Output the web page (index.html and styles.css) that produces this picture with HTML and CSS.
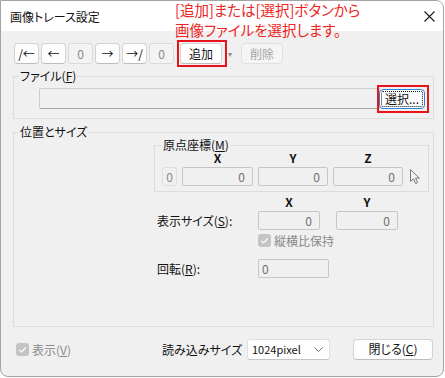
FILE: index.html
```html
<!DOCTYPE html>
<html lang="ja">
<head>
  <meta charset="UTF-8" />
  <title>画像トレース設定</title>
  <link rel="stylesheet" href="styles.css">
</head>
<body>
  <div class="window">
    <div class="titlebar">
      <span class="title">画像トレース設定</span>
      <svg class="close" viewBox="0 0 11 11" width="11" height="11">
        <path d="M0.5 0.5 L10.5 10.5 M10.5 0.5 L0.5 10.5" stroke="#1a1a1a" stroke-width="1.1" fill="none"/>
      </svg>
    </div>

    <div class="content">
      <div class="toolbar">
        <button class="btn nav">/←</button>
        <button class="btn nav">←</button>
        <span class="spin">0</span>
        <button class="btn nav">→</button>
        <button class="btn nav">→/</button>
        <span class="spin">0</span>
        <span class="mark-wrap add-wrap">
          <button class="btn add">追加</button>
          <span class="hl hl-add"></span>
        </span>
        <span class="drop">▾</span>
        <button class="btn del" disabled>削除</button>
      </div>

      <fieldset class="group file-group">
        <legend>ファイル(<u>F</u>)</legend>
        <div class="file-row">
          <span class="path"></span>
          <span class="mark-wrap">
            <button class="btn pick">選択...</button>
            <span class="hl hl-pick"></span>
          </span>
        </div>
      </fieldset>

      <fieldset class="group pos-group">
        <legend>位置とサイズ</legend>

        <fieldset class="group origin">
          <legend>原点座標(<u>M</u>)</legend>
          <div class="axis axis-head">
            <span class="c-mini"></span>
            <span class="c-x">X</span>
            <span class="c-y">Y</span>
            <span class="c-z">Z</span>
          </div>
          <div class="axis axis-row">
            <span class="c-mini mini">0</span>
            <span class="c-x field">0</span>
            <span class="c-y field">0</span>
            <span class="c-z field">0</span>
            <svg class="pointer" viewBox="0 0 10 16" width="10" height="16">
              <path d="M0.5 0.5 V12.5 L3.5 9.8 L5.6 14.6 L7.6 13.7 L5.6 9.1 H9.3 Z" fill="#f0f0f0" stroke="#7a7a7a" stroke-width="1"/>
            </svg>
          </div>
        </fieldset>

        <div class="size-grid">
          <span></span>
          <span class="head">X</span>
          <span class="head">Y</span>

          <span class="lbl">表示サイズ(<u>S</u>):</span>
          <span class="field">0</span>
          <span class="field">0</span>

          <span></span>
          <span class="check-line">
            <span class="check">
              <svg viewBox="0 0 13 13" width="13" height="13"><path d="M3.3 6.8 L5.5 9 L9.8 4.5" stroke="#fff" stroke-width="1.2" fill="none"/></svg>
            </span>
            <span class="muted">縦横比保持</span>
          </span>
          <span></span>

          <span class="lbl rot-lbl">回転(<u>R</u>):</span>
          <span class="field field-left rot">0</span>
          <span></span>
        </div>
      </fieldset>

      <div class="footer">
        <span class="check-line show">
          <span class="check">
            <svg viewBox="0 0 13 13" width="13" height="13"><path d="M3.3 6.8 L5.5 9 L9.8 4.5" stroke="#fff" stroke-width="1.2" fill="none"/></svg>
          </span>
          <span class="muted">表示(<u>V</u>)</span>
        </span>
        <span class="load-lbl">読み込みサイズ</span>
        <span class="select">
          <span>1024pixel</span>
          <svg viewBox="0 0 9 5" width="9" height="5"><path d="M0.5 0.5 L4.5 4.5 L8.5 0.5" stroke="#6a6a6a" fill="none"/></svg>
        </span>
        <button class="btn close-btn">閉じる(<u>C</u>)</button>
      </div>
    </div>

    <div class="note">[追加]または[選択]ボタンから<br>画像ファイルを選択します。</div>
  </div>
</body>
</html>
```

FILE: styles.css
```css
body {
  margin: 0;
  background: #fff;
  font-family: "Noto Sans CJK JP", "Noto Sans", sans-serif;
  font-size: 12px;
  font-feature-settings: "palt";
  color: #111;
}

.window {
  position: relative;
  box-sizing: border-box;
  width: 444px;
  height: 377px;
  border: 1px solid #a3a3a3;
  border-radius: 0 8px 8px 8px;
  background: #f0f0f0;
  overflow: hidden;
}

.titlebar {
  height: 30px;
  background: #fff;
  display: flex;
  align-items: center;
  justify-content: space-between;
  padding: 0 8px 0 9px;
}

.content {
  padding: 12px 0 0 12px;
}

/* toolbar */
.toolbar {
  display: flex;
  align-items: center;
  gap: 2px;
  height: 21px;
  margin-left: 1px;
}

.btn {
  box-sizing: border-box;
  height: 21px;
  padding: 0;
  border: 1px solid #d2d2d2;
  border-bottom-color: #bdbdbd;
  border-radius: 4px;
  background: #fdfdfd;
  font: inherit;
  color: #111;
  line-height: 18px;
}

.nav {
  width: 25px;
}

.spin {
  box-sizing: border-box;
  width: 25px;
  height: 21px;
  border: 1px solid #dadada;
  border-radius: 3px;
  background: #f3f3f3;
  color: #8c8c8c;
  text-align: center;
  line-height: 19px;
}

.mark-wrap {
  position: relative;
  display: inline-flex;
}

.add-wrap {
  margin-left: 4px;
}

.add {
  width: 42px;
  background: #fff;
}

.hl {
  position: absolute;
  border: 2px solid #e8141b;
}

.hl-add {
  left: -3px;
  top: -3px;
  right: -5px;
  bottom: -3px;
}

.drop {
  width: 7px;
  margin-left: 4px;
  font-size: 8px;
  color: #8a8a8a;
}

.del {
  width: 42px;
  margin-left: 4px;
  background: #f5f5f5;
  border-color: #e1e1e1;
  color: #a3a3a3;
}

/* group boxes */
.group {
  box-sizing: border-box;
  min-width: 0;
  margin: 0;
  padding: 0;
  border: 1px solid #dcdcdc;
}

.group legend {
  margin-left: 5px;
  padding: 0 1px;
  line-height: 16px;
}

.file-group {
  width: 421px;
  margin-top: 4px;
}

.file-row {
  display: flex;
  align-items: center;
  margin: 4px 0 0 25px;
  padding-bottom: 9px;
}

.path {
  box-sizing: border-box;
  width: 341px;
  height: 21px;
  border: 1px solid #cdcdcd;
  border-bottom-color: #a8a8a8;
  border-radius: 2px 0 0 2px;
  background: #f0f0f0;
}

.pick {
  width: 46px;
  height: 20px;
  margin-left: -1px;
  border-color: #2b82d9;
  background: #fff;
  outline: 1px dotted #111;
  outline-offset: -3px;
}

.hl-pick {
  left: -3px;
  top: -4px;
  right: -4px;
  bottom: -4px;
}

.pos-group {
  width: 421px;
  margin-top: 5px;
  padding-bottom: 48px;
}

.origin {
  width: 275px;
  margin: -2px 0 0 140px;
  padding: 0 0 5px 7px;
}

.origin legend {
  margin-left: 0;
  line-height: 14px;
}

.axis {
  display: flex;
  gap: 5px;
}

.axis-head {
  line-height: 12px;
  font-weight: bold;
  text-align: center;
}

.axis-row {
  margin-top: 3px;
  align-items: center;
}

.c-mini { width: 15px; }
.c-x { width: 71px; }
.c-y { width: 70px; }
.c-z { width: 70px; }

.mini {
  box-sizing: border-box;
  height: 19px;
  border: 1px solid #dedede;
  border-radius: 3px;
  color: #8c8c8c;
  text-align: center;
  line-height: 17px;
}

.field {
  box-sizing: border-box;
  height: 19px;
  padding-right: 7px;
  border: 1px solid #c6c6c6;
  border-radius: 2px;
  background: #f0f0f0;
  color: #707070;
  text-align: right;
  line-height: 17px;
}

.field-left {
  text-align: left;
  padding-left: 3px;
}

.pointer {
  margin-left: 2px;
}

.size-grid {
  display: grid;
  grid-template-columns: 85px 62px 62px;
  column-gap: 16px;
  align-items: center;
  margin: 4px 0 0 143px;
}

.size-grid .head {
  line-height: 12px;
  font-weight: bold;
  text-align: center;
  margin-bottom: 3px;
}

.lbl {
  white-space: nowrap;
}

.check-line {
  display: flex;
  align-items: center;
  gap: 3px;
  white-space: nowrap;
  margin-top: 3px;
  height: 14px;
}

.check {
  width: 13px;
  height: 13px;
  border-radius: 3px;
  background: #c4c4c4;
}

.check svg {
  display: block;
}

.muted {
  color: #8a8a8a;
}

.rot-lbl {
  margin-top: 12px;
}

.rot {
  width: 71px;
  margin-top: 12px;
}

/* footer */
.footer {
  display: flex;
  align-items: center;
  margin-top: 11px;
  height: 22px;
}

.show {
  width: 146px;
  margin: 0 0 0 3px;
}

.load-lbl {
  width: 85px;
  flex-shrink: 0;
  white-space: nowrap;
}

.select {
  box-sizing: border-box;
  display: flex;
  align-items: center;
  justify-content: space-between;
  width: 83px;
  height: 21px;
  padding: 0 6px 0 4px;
  border: 1px solid #e0e0e0;
  border-bottom-color: #c4c4c4;
  border-radius: 3px;
  background: #fff;
  font-size: 11px;
}

.close-btn {
  width: 80px;
  margin-left: 23px;
}

.note {
  position: absolute;
  left: 174px;
  top: -1px;
  font-size: 14.5px;
  line-height: 20px;
  color: #ee2424;
}
```
